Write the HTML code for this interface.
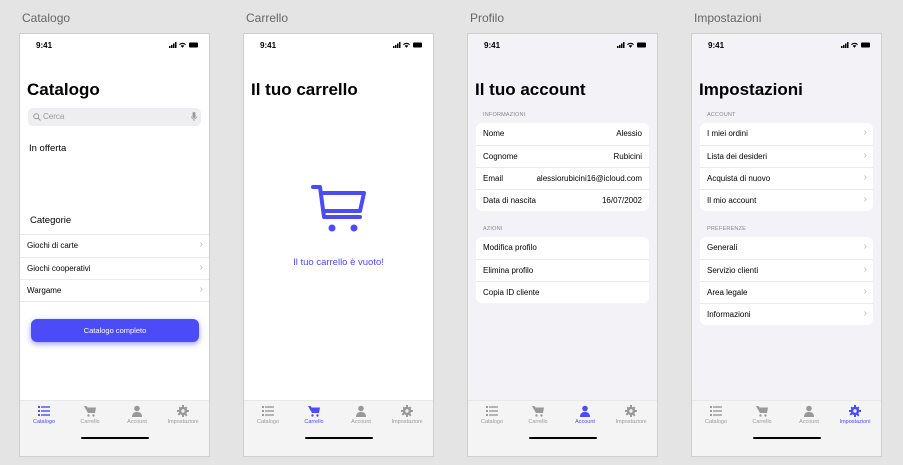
<!DOCTYPE html>
<html><head><meta charset="utf-8"><style>
*{box-sizing:border-box;margin:0;padding:0}
body{width:903px;height:465px;background:#e4e4e4;font-family:"Liberation Sans",sans-serif;position:relative;overflow:hidden;color:#000}
.lbl{position:absolute;top:11px;font-size:12px;color:#666}
.ph{position:absolute;top:33px;width:191px;height:424px;background:#fff;border:1px solid #cfcfcf;overflow:hidden}
.ph.g{background:#f2f2f7}
.time{position:absolute;left:16px;top:7px;font-size:8px;font-weight:bold}
.st{position:absolute;right:10px;top:8px;width:30px;height:6px}
.title{position:absolute;left:7px;top:46px;font-size:17px;font-weight:bold}
.tab{position:absolute;left:0;right:0;top:366px;height:58px;background:#f4f4f4;border-top:1px solid #e8e8e8}
.ti{position:absolute;top:4px;width:48px;text-align:center;font-size:5.5px;color:#999}
.ti svg{display:block;margin:0 auto 2px;width:12px;height:12px}
.ti.on{color:#4b4bf8}
.home{position:absolute;left:61px;top:36px;width:68px;height:2px;background:#000;border-radius:1px}
.row{height:22px;font-size:8px;line-height:22px;padding:0 7px;position:relative}
.row+.row{border-top:1px solid #eaeaea}
.row .r{position:absolute;right:7px;top:0}
.chev{position:absolute;right:6px;top:0;color:#bbb;font-size:10px;line-height:20px}
.grp{position:absolute;left:8px;width:173px;background:#fff;border-radius:6px;overflow:hidden}
.gh{position:absolute;left:15px;font-size:5.5px;color:#888;letter-spacing:.2px}
</style></head><body>
<div class="lbl" style="left:22px">Catalogo</div>
<div class="lbl" style="left:246px">Carrello</div>
<div class="lbl" style="left:470px">Profilo</div>
<div class="lbl" style="left:694px">Impostazioni</div>

<svg width="0" height="0" style="position:absolute"><defs>
<g id="list"><rect x="0" y="1" width="2" height="2"/><rect x="3" y="1.3" width="9" height="1.4"/><rect x="0" y="5" width="2" height="2"/><rect x="3" y="5.3" width="9" height="1.4"/><rect x="0" y="9" width="2" height="2"/><rect x="3" y="9.3" width="9" height="1.4"/></g>
<g id="cart"><path d="M0 1h2.5l1 1.5h8.5l-1 5.5h-7z"/><circle cx="4.5" cy="10.5" r="1.2"/><circle cx="9.5" cy="10.5" r="1.2"/></g>
<g id="user"><circle cx="6" cy="3.5" r="2.8"/><path d="M1 12c0-4 2.5-5 5-5s5 1 5 5z"/></g>
<g id="gear"><circle cx="6" cy="6" r="4.2"/><path d="M5 0h2v12h-2zM0 5h12v2h-12zM1.5 2.9l1.4-1.4 7.6 8.6-1.4 1.4zM9.1 1.5l1.4 1.4-8.6 7.6-1.4-1.4z"/><circle cx="6" cy="6" r="1.7" fill="#f4f4f4"/></g>
</defs></svg>

<div class="ph" style="left:19px">
<div class="time">9:41</div>
<svg class="st" viewBox="0 0 30 6"><rect x="0" y="4" width="1.5" height="2"/><rect x="2" y="3" width="1.5" height="3"/><rect x="4" y="1.5" width="1.5" height="4.5"/><rect x="6" y="0" width="1.5" height="6"/><path d="M10 2.2a5 5 0 0 1 7 0l-.8.8a4 4 0 0 0-5.4 0zM11.7 3.8a2.6 2.6 0 0 1 3.6 0l-1.8 2z"/><rect x="20" y="0.5" width="9" height="5" rx="1"/></svg>
<div class="title">Catalogo</div>
<div style="position:absolute;left:8px;top:74px;width:173px;height:18px;background:#eeeef0;border-radius:5px;font-size:8px;color:#999;line-height:18px;padding-left:15px">Cerca
<svg style="position:absolute;left:5px;top:5px" width="8" height="8" viewBox="0 0 8 8"><circle cx="3.2" cy="3.2" r="2.5" fill="none" stroke="#999" stroke-width="1"/><path d="M5 5l2.5 2.5" stroke="#999"/></svg>
<svg style="position:absolute;right:4px;top:4px" width="6" height="10" viewBox="0 0 6 10"><rect x="1.5" y="0" width="3" height="6" rx="1.5" fill="#999"/><path d="M.5 4.5a2.5 2.5 0 0 0 5 0M3 7v2" stroke="#999" fill="none" stroke-width=".8"/></svg></div>
<div style="position:absolute;left:9px;top:109px;font-size:9.5px">In offerta</div>
<div style="position:absolute;left:10px;top:181px;font-size:9.5px">Categorie</div>
<div style="position:absolute;left:0;right:0;top:200px;border-top:1px solid #eaeaea;border-bottom:1px solid #eaeaea">
<div class="row">Giochi di carte<span class="chev">›</span></div>
<div class="row">Giochi cooperativi<span class="chev">›</span></div>
<div class="row">Wargame<span class="chev">›</span></div></div>
<div style="position:absolute;left:11px;top:285px;width:168px;height:23px;background:#4b4bf8;border-radius:6px;color:#fff;font-size:7.5px;text-align:center;line-height:23px;box-shadow:0 2px 6px rgba(75,75,248,.55)">Catalogo completo</div>
<div class="tab">
<div class="ti on" style="left:0"><svg viewBox="0 0 12 12" fill="#4b4bf8"><use href="#list"/></svg>Catalogo</div>
<div class="ti" style="left:46px"><svg viewBox="0 0 12 12" fill="#999"><use href="#cart"/></svg>Carrello</div>
<div class="ti" style="left:93px"><svg viewBox="0 0 12 12" fill="#999"><use href="#user"/></svg>Account</div>
<div class="ti" style="left:139px"><svg viewBox="0 0 12 12" fill="#999"><use href="#gear"/></svg>Impostazioni</div>
<div class="home"></div></div>
</div>

<div class="ph" style="left:243px">
<div class="time">9:41</div>
<svg class="st" viewBox="0 0 30 6"><rect x="0" y="4" width="1.5" height="2"/><rect x="2" y="3" width="1.5" height="3"/><rect x="4" y="1.5" width="1.5" height="4.5"/><rect x="6" y="0" width="1.5" height="6"/><path d="M10 2.2a5 5 0 0 1 7 0l-.8.8a4 4 0 0 0-5.4 0zM11.7 3.8a2.6 2.6 0 0 1 3.6 0l-1.8 2z"/><rect x="20" y="0.5" width="9" height="5" rx="1"/></svg>
<div class="title">Il tuo carrello</div>
<svg style="position:absolute;left:66px;top:150px" width="60" height="50" viewBox="0 0 60 50"><path d="M3 3h7l4 30h36" fill="none" stroke="#4b4bf8" stroke-width="4" stroke-linecap="round" stroke-linejoin="round"/><path d="M11 9h43l-4 18h-37" fill="none" stroke="#4b4bf8" stroke-width="4" stroke-linejoin="round"/><circle cx="22" cy="44" r="3.5" fill="#4b4bf8"/><circle cx="44" cy="44" r="3.5" fill="#4b4bf8"/></svg>
<div style="position:absolute;left:0;right:0;top:223px;text-align:center;font-size:9.5px;color:#4b4bf8">Il tuo carrello è vuoto!</div>
<div class="tab">
<div class="ti" style="left:0"><svg viewBox="0 0 12 12" fill="#999"><use href="#list"/></svg>Catalogo</div>
<div class="ti on" style="left:46px"><svg viewBox="0 0 12 12" fill="#4b4bf8"><use href="#cart"/></svg>Carrello</div>
<div class="ti" style="left:93px"><svg viewBox="0 0 12 12" fill="#999"><use href="#user"/></svg>Account</div>
<div class="ti" style="left:139px"><svg viewBox="0 0 12 12" fill="#999"><use href="#gear"/></svg>Impostazioni</div>
<div class="home"></div></div>
</div>

<div class="ph g" style="left:467px">
<div class="time">9:41</div>
<svg class="st" viewBox="0 0 30 6"><rect x="0" y="4" width="1.5" height="2"/><rect x="2" y="3" width="1.5" height="3"/><rect x="4" y="1.5" width="1.5" height="4.5"/><rect x="6" y="0" width="1.5" height="6"/><path d="M10 2.2a5 5 0 0 1 7 0l-.8.8a4 4 0 0 0-5.4 0zM11.7 3.8a2.6 2.6 0 0 1 3.6 0l-1.8 2z"/><rect x="20" y="0.5" width="9" height="5" rx="1"/></svg>
<div class="title">Il tuo account</div>
<div class="gh" style="top:78px">INFORMAZIONI</div>
<div class="grp" style="top:89px">
<div class="row">Nome<span class="r">Alessio</span></div>
<div class="row">Cognome<span class="r">Rubicini</span></div>
<div class="row">Email<span class="r">alessiorubicini16@icloud.com</span></div>
<div class="row">Data di nascita<span class="r">16/07/2002</span></div></div>
<div class="gh" style="top:192px">AZIONI</div>
<div class="grp" style="top:203px">
<div class="row">Modifica profilo</div>
<div class="row">Elimina profilo</div>
<div class="row">Copia ID cliente</div></div>
<div class="tab">
<div class="ti" style="left:0"><svg viewBox="0 0 12 12" fill="#999"><use href="#list"/></svg>Catalogo</div>
<div class="ti" style="left:46px"><svg viewBox="0 0 12 12" fill="#999"><use href="#cart"/></svg>Carrello</div>
<div class="ti on" style="left:93px"><svg viewBox="0 0 12 12" fill="#4b4bf8"><use href="#user"/></svg>Account</div>
<div class="ti" style="left:139px"><svg viewBox="0 0 12 12" fill="#999"><use href="#gear"/></svg>Impostazioni</div>
<div class="home"></div></div>
</div>

<div class="ph g" style="left:691px">
<div class="time">9:41</div>
<svg class="st" viewBox="0 0 30 6"><rect x="0" y="4" width="1.5" height="2"/><rect x="2" y="3" width="1.5" height="3"/><rect x="4" y="1.5" width="1.5" height="4.5"/><rect x="6" y="0" width="1.5" height="6"/><path d="M10 2.2a5 5 0 0 1 7 0l-.8.8a4 4 0 0 0-5.4 0zM11.7 3.8a2.6 2.6 0 0 1 3.6 0l-1.8 2z"/><rect x="20" y="0.5" width="9" height="5" rx="1"/></svg>
<div class="title">Impostazioni</div>
<div class="gh" style="top:78px">ACCOUNT</div>
<div class="grp" style="top:89px">
<div class="row">I miei ordini<span class="chev">›</span></div>
<div class="row">Lista dei desideri<span class="chev">›</span></div>
<div class="row">Acquista di nuovo<span class="chev">›</span></div>
<div class="row">Il mio account<span class="chev">›</span></div></div>
<div class="gh" style="top:192px">PREFERENZE</div>
<div class="grp" style="top:203px">
<div class="row">Generali<span class="chev">›</span></div>
<div class="row">Servizio clienti<span class="chev">›</span></div>
<div class="row">Area legale<span class="chev">›</span></div>
<div class="row">Informazioni<span class="chev">›</span></div></div>
<div class="tab">
<div class="ti" style="left:0"><svg viewBox="0 0 12 12" fill="#999"><use href="#list"/></svg>Catalogo</div>
<div class="ti" style="left:46px"><svg viewBox="0 0 12 12" fill="#999"><use href="#cart"/></svg>Carrello</div>
<div class="ti" style="left:93px"><svg viewBox="0 0 12 12" fill="#999"><use href="#user"/></svg>Account</div>
<div class="ti on" style="left:139px"><svg viewBox="0 0 12 12" fill="#4b4bf8"><use href="#gear"/></svg>Impostazioni</div>
<div class="home"></div></div>
</div>
</body></html>
